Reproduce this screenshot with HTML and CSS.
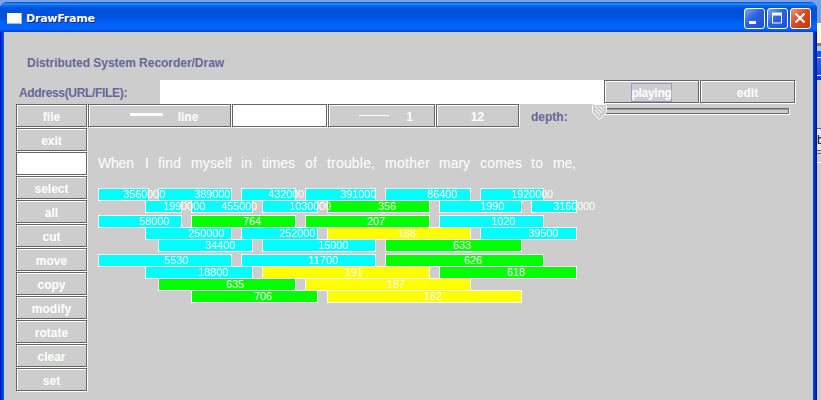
FILE: index.html
```html
<!DOCTYPE html>
<html lang="en">
<head>
<meta charset="utf-8">
<title>DrawFrame</title>
<link rel="stylesheet" href="styles.css">
</head>
<body>
<div class="desktop">
<div class="window">
  <header class="titlebar">
    <span class="app-icon"></span>
    <h1 class="title"><svg width="74" height="18"><text class="title-shadow" x="1" y="14" textLength="69">DrawFrame</text><text class="title-text" x="0" y="13" textLength="69">DrawFrame</text></svg></h1>
    <div class="controls">
      <span class="control"><svg width="19" height="19"><path d="M4 13.5h7" stroke="#fff" stroke-width="3"/></svg></span>
      <span class="control"><svg width="19" height="19"><path d="M4.500 4v10h9V4" fill="none" stroke="#fff"/><path d="M4 5h10" stroke="#fff" stroke-width="3"/></svg></span>
      <span class="control close"><svg width="19" height="19"><path d="M4.500 4.500l9 9M13.500 4.500l-9 9" stroke="#fff" stroke-width="2.200"/></svg></span>
    </div>
  </header>
  <main class="content">
    <p class="heading">Distributed System Recorder/Draw</p>
    <div class="address-row">
      <label class="address-label">Address(URL/FILE):</label>
      <div class="address-field"></div>
      <div class="cell wide"><span class="button"><span class="focus">playing</span></span></div>
      <div class="cell wide"><span class="button">edit</span></div>
    </div>
    <div class="workspace">
      <nav class="sidebar">
        <div class="cell"><span class="button">file</span></div>
        <div class="cell"><span class="button">exit</span></div>
        <div class="cell"><span class="button blank"></span></div>
        <div class="cell"><span class="button">select</span></div>
        <div class="cell"><span class="button">all</span></div>
        <div class="cell"><span class="button">cut</span></div>
        <div class="cell"><span class="button">move</span></div>
        <div class="cell"><span class="button">copy</span></div>
        <div class="cell"><span class="button">modify</span></div>
        <div class="cell"><span class="button">rotate</span></div>
        <div class="cell"><span class="button">clear</span></div>
        <div class="cell"><span class="button">set</span></div>
      </nav>
      <div class="stage">
        <div class="toolbar">
          <div class="cell line"><span class="button sample"><i class="stroke thick"></i>line</span></div>
          <div class="cell wide"><span class="button blank"></span></div>
          <div class="cell weight"><span class="button sample"><i class="stroke"></i>1</span></div>
          <div class="cell size"><span class="button">12</span></div>
          <span class="depth-label">depth:</span>
          <svg class="slider" width="200" height="18">
            <path d="M9.500 10.500v-6h187" fill="none" stroke="#666"/>
            <path d="M10 5.500h186" stroke="#999"/>
            <path d="M10 9.500h186.500v-5" fill="none" stroke="#666"/>
            <path d="M10 10.500h187.500v-6" fill="none" stroke="#fff"/>
            <path d="M.5 1.500l1-1h12l1 1v7l-7 7-7-7z" fill="#ccc" stroke="#fff"/>
            <path d="M3 2l7 7M7 2l5 5M11 2l2 2M3 6l5 5" stroke="#fff"/>
          </svg>
        </div>
        <svg class="canvas" width="725" height="272" viewBox="88 128 725 272"></svg>
      </div>
    </div>
  </main>
</div>
<aside class="behind">
  <div class="behind-sky"></div><div class="behind-paper"></div><div class="behind-edge"></div><div class="behind-title"></div>
  <div class="behind-panel"><span class="behind-field">b</span><span class="behind-track"></span></div>
</aside>
</div>
<script src="canvas.js"></script>
</body>
</html>
```
FILE: styles.css
```css
* { box-sizing: border-box; }
body { margin: 0; font: bold 12px "Liberation Sans", Arial, sans-serif; overflow: hidden; }
.desktop { display: flex; width: 821px; height: 400px; padding-top: 2px; background: #7da2e8; }
.window { width: 817px; height: 398px; border-radius: 7px 7px 0 0; overflow: hidden;
  background: linear-gradient(90deg, #0010b0 0, #0038e0 2px, #0066f0 4px, #0060f0 813px, #0040dd 814px, #0018a8 816px, #001090 817px); }
.titlebar { display: flex; align-items: center; height: 30px; padding: 2px 6px 0 7px;
  background: linear-gradient(#0048c8 0, #2a90ff 2px, #0066ee 4px, #0050d8 7px, #0052e0 15px, #0062fa 22px, #0066ff 27px, #0040d0 30px); }
.app-icon { width: 15px; height: 11px; background: #fff; border: solid #b8b8b8; border-width: 0 1px 1px 0; }
.title { display: flex; margin: 0 auto 0 4px; font: bold 11px "DejaVu Sans", sans-serif; }
.title-text { fill: #fff; }
.title-shadow { fill: #06257c; }
.controls { display: flex; gap: 2px; }
.control { display: flex; width: 21px; height: 21px; border: 1px solid #fff; border-radius: 3px; background: linear-gradient(135deg, #7da5f5, #2b62e0 45%, #1b50d5); }
.close { background: linear-gradient(135deg, #f09a80, #dd4a20 45%, #c03808); }
.content { width: 809px; height: 368px; margin-left: 4px; background: #cdcdcd; color: #fff; }
.heading { height: 48px; margin: 0; padding: 24px 0 0 23px; line-height: 14px; color: #666699; letter-spacing: -.03px; }
.address-row { display: flex; height: 24px; }
.address-label { width: 156px; padding-left: 15px; line-height: 26px; color: #666699; letter-spacing: -.33px; }
.address-field { width: 444px; background: #fff; }
.cell { display: flex; width: 72px; height: 24px; padding: 0 1px 1px 0; }
.cell.wide { width: 96px; }
.cell.line { width: 144px; }
.cell.weight { width: 108px; }
.cell.size { width: 84px; }
.button { display: flex; flex: 1; align-items: center; justify-content: center; line-height: 18px; padding-top: 2px; border: 1px solid #666; box-shadow: 1px 1px #fff, inset 1px 1px #fff; }
.sample { padding-left: 9px; }
.blank { background: #fff; }
.focus { height: 19px; margin-top: -1px; letter-spacing: -.3px; border: 1px solid #9999cc; }
.stroke { width: 30px; height: 1px; margin: -3px 17px 0 0; background: #fff; }
.thick { width: 33px; height: 3px; margin: -5px 15px 0 0; }
.workspace { display: flex; padding-left: 12px; }
.sidebar { width: 72px; }
.stage { width: 725px; }
.toolbar { display: flex; height: 24px; }
.depth-label { width: 72px; padding-left: 11px; line-height: 26px; color: #666699; }
.slider { display: block; }
.canvas { display: block; }
.bar { stroke: #fff; }
.cyan { fill: #00ffff; }
.green { fill: #00ff00; }
.yellow { fill: #ffff00; }
.value { font: 10px "Liberation Sans", Arial, sans-serif; fill: #fff; }
.lyric { font: 14px "Liberation Sans", Arial, sans-serif; fill: #fff; }
.behind { width: 4px; }
.behind-sky { height: 21px; background: #7d9fda; }
.behind-paper { height: 20px; background: #fff8e4; }
.behind-edge { height: 8px; background: linear-gradient(#808070 3px, #b8c8e8 3px); }
.behind-title { height: 29px; background: linear-gradient(#0060f0 6px, #fff 6px, #fff 7px, #2a66e0 7px, #1550d8 24px, #fff 24px, #fff 25px, #0040d8 25px); }
.behind-panel { height: 320px; padding-top: 48px; background: #cdcdcd; }
.behind-field { display: block; height: 23px; overflow: hidden; background: #e8e8e8; border: solid #666; border-width: 1px 0; color: #000; font: 12px/22px "Liberation Sans", Arial, sans-serif; }
.behind-track { display: block; height: 10px; margin-top: 2px; border: solid #777; border-width: 1px 0; border-bottom-color: #fff; }
```
FILE: canvas.js
```js
// Each row: top edge, then [left, right, value, colour] for every phrase segment.
const rows = [
  [188, [98,149,"3560000","cyan"],[158,232,"389000","cyan"],[241,296,"432000","cyan"],[305,376,"391000","cyan"],[385,471,"86400","cyan"],[480,544,"1920000","cyan"]],
  [200, [145,182,"1990000","cyan"],[191,253,"455000","cyan"],[262,318,"1030000","cyan"],[327,430,"356","green"],[439,522,"1990","cyan"],[531,577,"3160000","cyan"]],
  [215, [98,182,"58000","cyan"],[191,296,"764","green"],[305,430,"207","green"],[439,544,"1020","cyan"]],
  [227, [145,232,"250000","cyan"],[241,318,"252000","cyan"],[327,471,"188","yellow"],[480,577,"39500","cyan"]],
  [239, [158,253,"34400","cyan"],[262,376,"15000","cyan"],[385,522,"633","green"]],
  [254, [98,232,"5530","cyan"],[241,376,"11700","cyan"],[385,544,"626","green"]],
  [266, [145,253,"18800","cyan"],[262,430,"191","yellow"],[439,577,"618","green"]],
  [278, [158,296,"635","green"],[305,471,"187","yellow"]],
  [290, [191,318,"706","green"],[327,522,"182","yellow"]]
];
const words = [["When",98,36],["I",145,4],["find",158,23],["myself",191,41],["in",241,11],["times",262,33],["of",305,12],["trouble,",327,48],["mother",385,45],["mary",439,31],["comes",480,42],["to",531,12],["me,",553,23]];
const canvas = document.querySelector(".canvas");

function add(tag, attributes, text) {
  const node = document.createElementNS("http://www.w3.org/2000/svg", tag);
  for (const name in attributes) node.setAttribute(name, attributes[name]);
  if (text) node.textContent = text;
  canvas.appendChild(node);
}

for (const [text, x, width] of words) add("text", { class: "lyric", x, y: 168, textLength: width }, text);
for (const [top, ...bars] of rows) {
  for (const [left, right, , colour] of bars)
    add("rect", { class: "bar " + colour, x: left + .5, y: top + .5, width: right - left - 1, height: 12 });
}
for (const [top, ...bars] of rows) {
  for (const [left, right, value] of bars)
    add("text", { class: "value", x: Math.floor((left + right - 1) / 2), y: top + 10, textLength: value.length * 6, lengthAdjust: "spacingAndGlyphs" }, value);
}
```
